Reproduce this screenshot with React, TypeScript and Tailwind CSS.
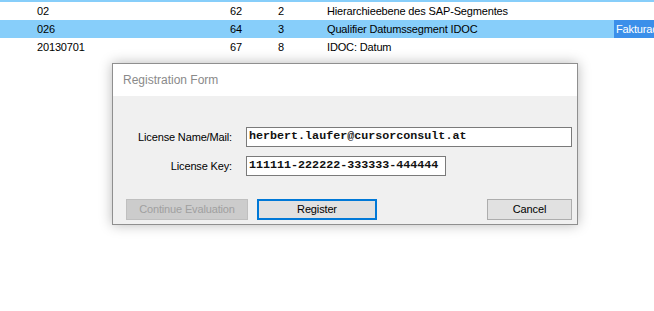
const rows = [
    { id: '02', a: '62', b: '2', text: 'Hierarchieebene des SAP-Segmentes', selected: false },
    { id: '026', a: '64', b: '3', text: 'Qualifier Datumssegment IDOC', selected: true },
    { id: '20130701', a: '67', b: '8', text: 'IDOC: Datum', selected: false },
];

export default function App() {
    return (
        <div className="relative w-[654px] h-[311px] bg-white overflow-hidden font-['Liberation_Sans',Arial,sans-serif] text-[11px] tracking-[-0.15px] text-black">
            {/* Grid behind the dialog */}
            <div className="h-[2px] bg-[#87cefa]" />
            {rows.map((r) => (
                <div key={r.id} className={`flex h-[18px] items-center ${r.selected ? 'bg-[#87cefa]' : ''}`}>
                    <div className="w-[230px] pl-[37px]">{r.id}</div>
                    <div className="w-[48px]">{r.a}</div>
                    <div className="w-[49px]">{r.b}</div>
                    <div className="w-[287px]">{r.text}</div>
                    {r.selected && (
                        <div className="flex-1 h-full flex items-center pl-[2px] bg-[#3b8fea] text-white whitespace-nowrap overflow-hidden">
                            Fakturad
                        </div>
                    )}
                </div>
            ))}

            {/* Registration dialog */}
            <div className="absolute left-[112px] top-[63px] w-[466px] flex flex-col border border-[#8f8f8f] bg-[#f0f0f0] shadow-[0_0_12px_rgba(0,0,0,0.28)]">
                <div className="h-[32px] bg-white flex items-center pl-[10px] text-[12px] tracking-normal text-[#8a8a8a]">Registration Form</div>
                <div className="flex flex-col pt-[31px] pb-[4px]">
                    <div className="flex items-center h-[20px]">
                        <div className="w-[120px] text-right pr-[1px]">License Name/Mail:</div>
                        <div className="ml-[13px] w-[326px] h-[20px] bg-white border border-[#7a7a7a] flex items-center pl-[2px] whitespace-nowrap font-['Liberation_Mono',monospace] font-bold text-[11.7px] tracking-normal text-[#111]">
                            herbert.laufer@cursorconsult.at
                        </div>
                    </div>
                    <div className="flex items-center h-[20px] mt-[9px]">
                        <div className="w-[120px] text-right pr-[1px]">License Key:</div>
                        <div className="ml-[13px] w-[200px] h-[20px] bg-white border border-[#7a7a7a] flex items-center pl-[2px] whitespace-nowrap font-['Liberation_Mono',monospace] font-bold text-[11.7px] tracking-normal text-[#111]">
                            111111-222222-333333-444444
                        </div>
                    </div>
                    <div className="flex items-center mt-[23px] h-[21px]">
                        <div className="ml-[13px] w-[122px] h-[21px] flex items-center justify-center bg-[#cccccc] border border-[#bfbfbf] text-[#a0a0a0]">
                            Continue Evaluation
                        </div>
                        <div className="ml-[9px] w-[120px] h-[21px] flex items-center justify-center bg-[#e1e1e1] border-2 border-[#0078d7]">
                            Register
                        </div>
                        <div className="ml-auto mr-[5px] w-[85px] h-[21px] flex items-center justify-center bg-[#e1e1e1] border border-[#adadad]">
                            Cancel
                        </div>
                    </div>
                </div>
            </div>
        </div>
    );
}
